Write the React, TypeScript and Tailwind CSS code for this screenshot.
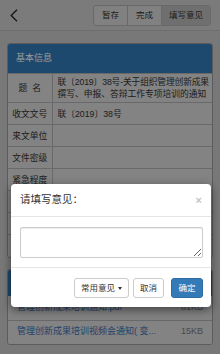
import React from "react";

const rows: { label: string; value: React.ReactNode; tall?: boolean }[] = [
  {
    label: "题\u00a0\u00a0名",
    value: (
      <>
        <span className="block whitespace-nowrap tracking-[-0.15px]">联〔2019〕38号-关于组织管理创新成果</span>
        <span className="block whitespace-nowrap">撰写、申报、答辩工作专项培训的通知</span>
      </>
    ),
    tall: true,
  },
  { label: "收文文号", value: "联〔2019〕38号" },
  { label: "来文单位", value: "" },
  { label: "文件密级", value: "" },
  { label: "紧急程度", value: "" },
  { label: "来文日期", value: "" },
  { label: "办理期限", value: "" },
  { label: "备\u00a0\u00a0注", value: "" },
];

const files = [
  { name: "管理创新成果培训通知.pdf", size: "61KB" },
  { name: "管理创新成果培训视频会通知( 变...", size: "15KB" },
];

function Chevron() {
  return (
    <svg width="8" height="13" viewBox="0 0 8 13" fill="none">
      <polyline points="7,0.8 1.2,6.5 7,12.2" stroke="#222" strokeWidth="1.3" />
    </svg>
  );
}

export default function App() {
  return (
    <div
      className="relative h-[354px] w-[220px] overflow-hidden bg-[#c8c8c8] text-[#333]"
      style={{ fontFamily: '"Liberation Sans", "Noto Sans CJK SC", sans-serif' }}
    >
      <header className="flex h-[31px] items-center justify-between border-b border-[#b7b7b7] bg-[#cecece] pl-[10px] pr-[9px]">
        <Chevron />
        <div className="flex h-[21px] overflow-hidden rounded-[3px] border border-[#afafaf] bg-[#d8d8d8] text-[8.5px] leading-none">
          <span className="flex items-center px-[8px]">暂存</span>
          <span className="flex items-center border-l border-[#afafaf] px-[8px]">完成</span>
          <span className="flex items-center border-l border-[#afafaf] bg-[#bababa] px-[7px]">填写意见</span>
        </div>
      </header>

      <main className="px-[7px] pt-[12px]">
        <section className="overflow-hidden rounded-[3px] border border-[#9a9a9a]">
          <div className="flex h-[29px] items-center bg-[#337ab7] px-[8px] text-[9px] text-white">基本信息</div>
          <table className="w-full table-fixed border-collapse bg-[#dadada] text-[8.75px] leading-[12px]">
            <colgroup>
              <col className="w-[44px]" />
              <col />
            </colgroup>
            <tbody>
              {rows.map((r) => (
                <tr key={r.label} className={`border-t border-[#b0b0b0] ${r.tall ? "h-[29px]" : "h-[22px]"}`}>
                  <td className="whitespace-nowrap border-r border-[#b0b0b0] p-0 text-center">{r.label}</td>
                  <td className="overflow-hidden py-0 pl-[5px] pr-0 align-middle">{r.value}</td>
                </tr>
              ))}
            </tbody>
          </table>
        </section>

        <section className="mt-[11px] overflow-hidden rounded-[3px] border border-[#9a9a9a]">
          <div className="flex h-[26px] items-center bg-[#337ab7] px-[8px] text-[9px] text-white">附件</div>
          {files.map((f, i) => (
            <div
              key={f.name}
              className={`flex h-[24px] items-center justify-between bg-[#dadada] px-[9px] text-[9px] ${i > 0 ? "border-t border-[#b0b0b0]" : ""}`}
            >
              <span className="text-[#3a6fae]">{f.name}</span>
              <span className="text-[#7a7a7a]">{f.size}</span>
            </div>
          ))}
        </section>
      </main>

      <div className="absolute inset-0 bg-black/40" />

      <div className="absolute left-[11px] top-[184px] w-[200px] rounded-[4px] bg-white shadow-[0_3px_10px_rgba(0,0,0,0.5)]">
        <div className="flex h-[33px] items-center justify-between border-b border-[#e5e5e5] pl-[9px] pr-[9px]">
          <span className="text-[10.5px] text-[#333]">请填写意见：</span>
          <span className="text-[11px] font-bold leading-none text-[#c4c4c4]">×</span>
        </div>
        <div className="px-[9px] pb-[9px] pt-[10px] pr-[8px]">
          <textarea className="block h-[31px] w-full resize-y rounded-[2px] border border-[#ccc] shadow-[inset_0_1px_1px_rgba(0,0,0,0.075)] outline-none" />
        </div>
        <div className="flex items-center justify-end border-t border-[#e5e5e5] pb-[9px] pr-[8px] pt-[10px] text-[8.5px] leading-none">
          <button className="flex h-[20px] w-[55px] items-center justify-center gap-[3px] rounded-[3px] border border-[#ccc] bg-white text-[#333]">
            常用意见
            <span className="h-0 w-0 border-x-[2.5px] border-t-[3px] border-x-transparent border-t-[#333]" />
          </button>
          <button className="ml-[4px] h-[20px] w-[31px] rounded-[3px] border border-[#ccc] bg-white text-[#333]">取消</button>
          <button className="ml-[7px] h-[20px] w-[32px] rounded-[3px] border border-[#2e6da4] bg-[#337ab7] text-white">确定</button>
        </div>
      </div>
    </div>
  );
}
